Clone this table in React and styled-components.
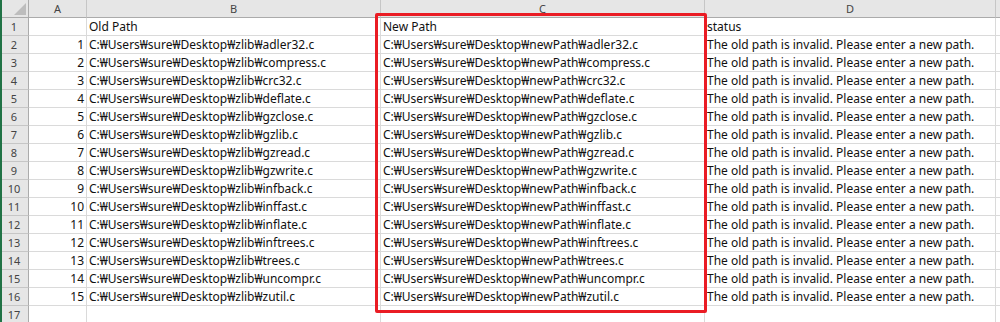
import React from "react";
import styled, { createGlobalStyle } from "styled-components";

const Global = createGlobalStyle`
  html, body { margin: 0; padding: 0; background: #fff; }
  body { font-family: "Noto Sans", "Noto Sans CJK KR", sans-serif; }
`;

const files = [
  "adler32.c", "compress.c", "crc32.c", "deflate.c", "gzclose.c", "gzlib.c",
  "gzread.c", "gzwrite.c", "infback.c", "inffast.c", "inflate.c", "inftrees.c",
  "trees.c", "uncompr.c", "zutil.c",
];

const COLS = "29px 58px 294px 324px 291px 1fr";

const Sheet = styled.div`
  position: relative;
  width: 1000px;
  height: 322px;
  overflow: hidden;
  background: #fff;
  border-left: 2px solid #217346;
  box-sizing: border-box;
`;

const Grid = styled.div`
  display: grid;
  grid-template-columns: ${COLS};
  grid-auto-rows: 18px;
  margin-left: -2px;
`;

const Corner = styled.div`
  background: #e6e6e6;
  border-right: 1px solid #ababab;
  border-bottom: 1px solid #ababab;
  box-sizing: border-box;
  position: relative;
  &::after {
    content: "";
    position: absolute;
    right: 2px;
    bottom: 2px;
    width: 0;
    height: 0;
    border-left: 12px solid transparent;
    border-bottom: 12px solid #bdbdbd;
  }
`;

const ColHead = styled.div`
  background: #e6e6e6;
  border-right: 1px solid ${(p) => (p.$last ? "#e6e6e6" : "#c6c6c6")};
  border-bottom: 1px solid #ababab;
  box-sizing: border-box;
  display: flex;
  align-items: center;
  justify-content: center;
  font-family: "Noto Sans", sans-serif;
  font-size: 11px;
  color: #444;
`;

const RowHead = styled.div`
  background: #e6e6e6;
  border-right: 1px solid #ababab;
  border-bottom: 1px solid #c6c6c6;
  box-sizing: border-box;
  display: flex;
  align-items: center;
  justify-content: center;
  font-family: "Noto Sans", sans-serif;
  font-size: 11px;
  color: #444;
`;

const Cell = styled.div`
  border-right: 1px solid #dadada;
  border-bottom: 1px solid #dadada;
  box-sizing: border-box;
  display: flex;
  align-items: center;
  justify-content: ${(p) => (p.$num ? "flex-end" : "flex-start")};
  padding: 0 2px 0 2px;
  font-family: "Noto Sans", "Noto Sans CJK KR", sans-serif;
  font-size: 12px;
  color: #111;
  white-space: nowrap;
  overflow: visible;
  line-height: 1;
`;

const Highlight = styled.div`
  position: absolute;
  left: 373px;
  top: 13px;
  width: 332px;
  height: 300px;
  border: 3px solid #ea1c24;
  border-radius: 2px;
  box-sizing: border-box;
  pointer-events: none;
`;

const W = "\u20A9";
const oldPath = (f) => `C:${W}Users${W}sure${W}Desktop${W}zlib${W}${f}`;
const newPath = (f) => `C:${W}Users${W}sure${W}Desktop${W}newPath${W}${f}`;
const STATUS = "The old path is invalid. Please enter a new path.";

export default function App() {
  const rows = [];
  rows.push(["", "Old Path", "New Path", "status"]);
  files.forEach((f, i) => rows.push([String(i + 1), oldPath(f), newPath(f), STATUS]));
  rows.push(["", "", "", ""]);

  return (
    <>
      <Global />
      <Sheet>
        <Grid>
          <Corner />
          <ColHead>A</ColHead>
          <ColHead>B</ColHead>
          <ColHead>C</ColHead>
          <ColHead>D</ColHead>
          <ColHead $last />
          {rows.map((r, i) => (
            <React.Fragment key={i}>
              <RowHead>{i + 1}</RowHead>
              <Cell $num>{r[0]}</Cell>
              <Cell>{r[1]}</Cell>
              <Cell>{r[2]}</Cell>
              <Cell>{r[3]}</Cell>
              <Cell />
            </React.Fragment>
          ))}
        </Grid>
        <Highlight />
      </Sheet>
    </>
  );
}
